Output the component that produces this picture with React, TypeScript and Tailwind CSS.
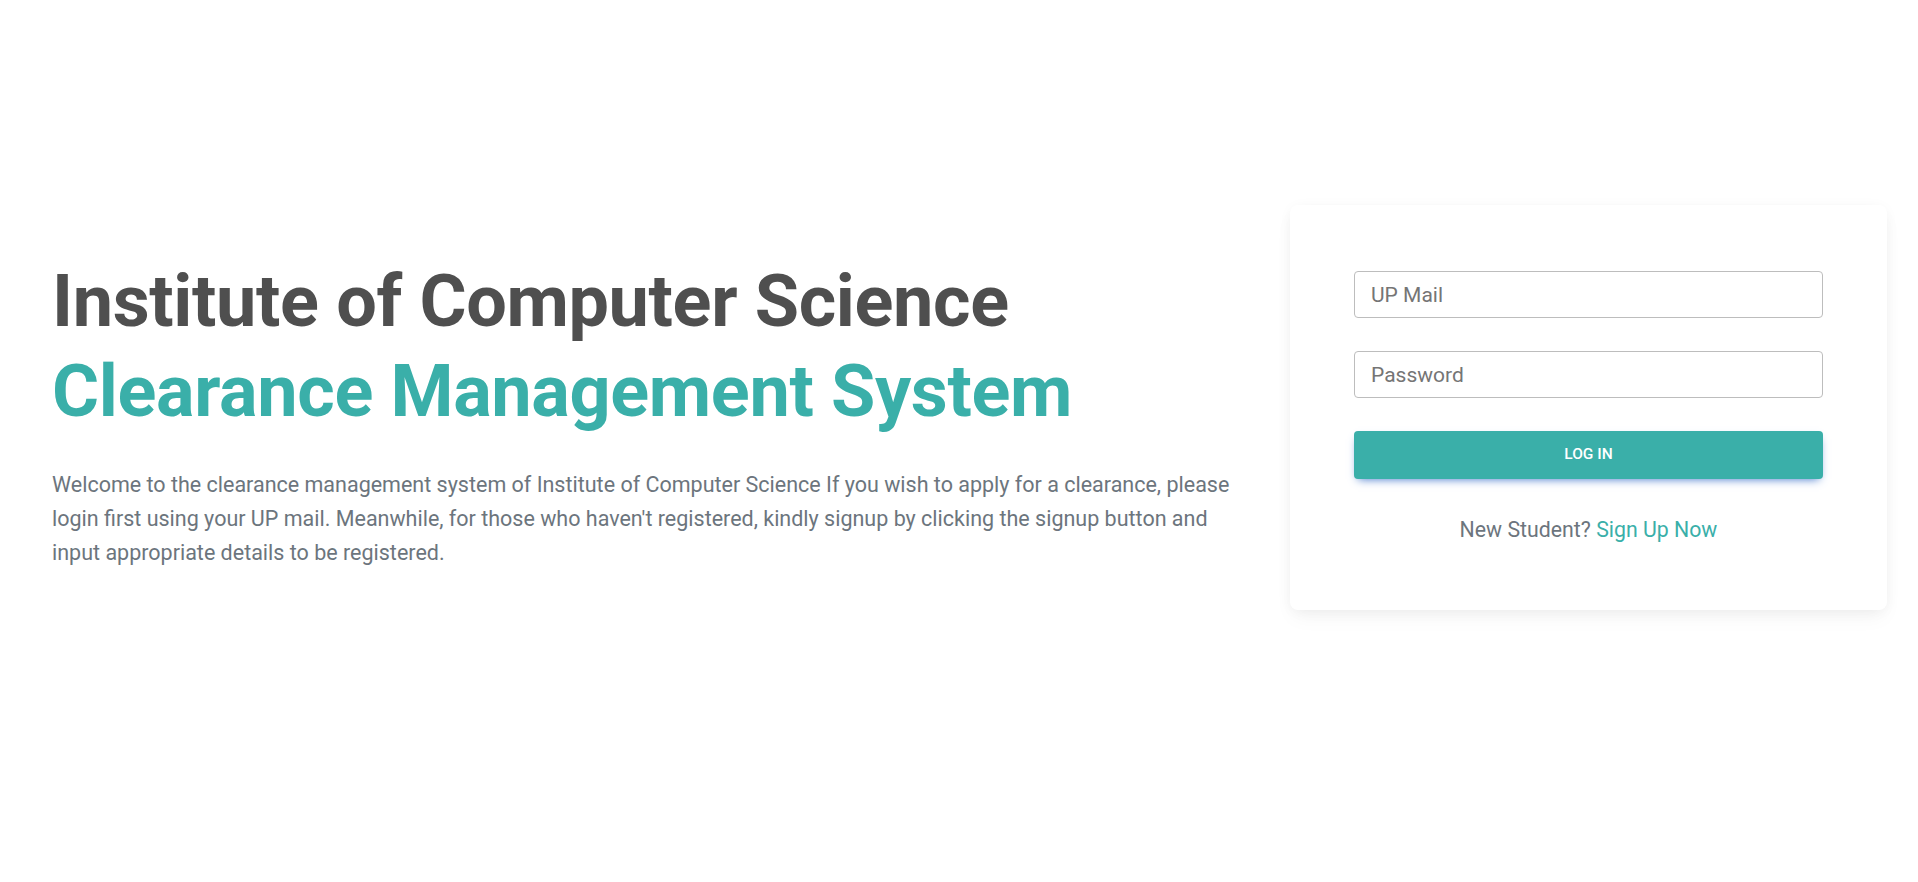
import { useState } from "react";

const LoginCard = () => {
	const [email, setEmail] = useState("");
	const [password, setPassword] = useState("");

	return (
		<div className="w-[597px] shrink-0 rounded-lg bg-white px-[64px] pt-[66px] pb-[64px] shadow-[0_2px_15px_-3px_rgba(0,0,0,0.07),0_10px_20px_-2px_rgba(0,0,0,0.04)]">
			<form className="flex flex-col" onSubmit={(e) => e.preventDefault()}>
				<input
					type="email"
					value={email}
					onChange={(e) => setEmail(e.target.value)}
					placeholder="UP Mail"
					className="h-[47px] w-full rounded-[4px] border border-[#bdbdbd] px-[16px] text-[21px] text-[#4f4f4f] outline-none placeholder:text-[#757575]"
				/>
				<input
					type="password"
					value={password}
					onChange={(e) => setPassword(e.target.value)}
					placeholder="Password"
					className="mt-[33px] h-[47px] w-full rounded-[4px] border border-[#bdbdbd] px-[16px] text-[21px] text-[#4f4f4f] outline-none placeholder:text-[#757575]"
				/>
				<button
					type="submit"
					className="mt-[33px] h-[48px] w-full rounded-[4px] bg-[#3aafa9] text-[15.5px] font-medium uppercase text-white shadow-[0_4px_9px_-4px_#3b71ca]"
				>
					Log in
				</button>
			</form>

			<p className="mt-[35px] text-center text-[21.3px] text-[#6c757d]">
				New Student?{" "}
				<a href="#" className="text-[#3aafa9]">
					Sign Up Now
				</a>
			</p>
		</div>
	);
};

export default function App() {
	return (
		<main className="min-h-screen bg-white font-['Roboto',sans-serif]">
			<div className="flex items-start gap-[48px] pt-[205px] pr-[31px] pl-[52px]">
				{/* intro */}
				<section className="mt-[52px] flex-1">
					<h1 className="text-[72px] leading-[90px] font-bold tracking-[-0.35px]">
						<span className="block text-[#4f4f4f]">Institute of Computer Science</span>
						<span className="block text-[#3aafa9]">Clearance Management System</span>
					</h1>
					<p className="mt-[31px] text-[21.5px] leading-[34px] text-[#6c757d]">
						Welcome to the clearance management system of Institute of Computer
						Science If you wish to apply for a clearance, please login first using
						your UP mail. Meanwhile, for those who haven't registered, kindly signup
						by clicking the signup button and input appropriate details to be
						registered.
					</p>
				</section>

				<LoginCard />
			</div>
		</main>
	);
}
